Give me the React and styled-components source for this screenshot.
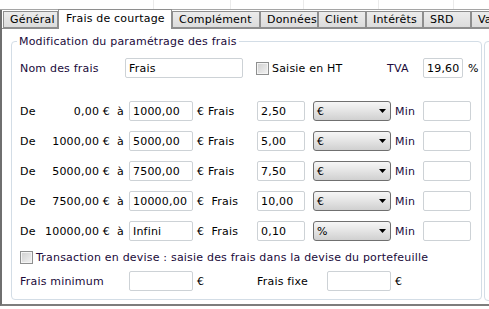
import React from 'react';
import styled, { createGlobalStyle } from 'styled-components';

const GlobalStyle = createGlobalStyle`
  *, *::before, *::after { box-sizing: border-box; }
  html, body { margin: 0; padding: 0; background: #fff; }
  body {
    font-family: "DejaVu Sans", Verdana, sans-serif;
    font-size: 11px;
    letter-spacing: 0.2px;
  }
`;

const Screen = styled.div`
  width: 489px;
  height: 309px;
  overflow: hidden;
  display: flex;
  flex-direction: column;
  background: #fff;
`;

const HeaderStrip = styled.div`
  display: flex;
  flex: none;
  height: 10px;
  border-bottom: 1px solid #a5a5a5;
`;

const HeaderCell = styled.div`
  flex: none;
  width: ${p => p.w}px;
  border-right: 1px solid #ebebeb;
`;

const Window = styled.div`
  flex: none;
  height: 296px;
  display: flex;
  flex-direction: column;
  border-left: 2px solid #6f6f6f;
  border-bottom: 2px solid #7d7d7d;
`;

const TabBar = styled.div`
  flex: none;
  height: 19px;
  display: flex;
  align-items: flex-end;
  padding-left: 1px;
  border-bottom: 1px solid #8e8e8e;
`;

const Tab = styled.div`
  flex: none;
  width: ${p => p.w}px;
  height: ${p => (p.active ? 20 : 17)}px;
  margin-bottom: ${p => (p.active ? -1 : 0)}px;
  position: relative;
  z-index: ${p => (p.active ? 1 : 0)};
  padding: ${p => (p.active ? '2px 0 0 7px' : '1px 0 0 6px')};
  border: 1px solid #8e8e8e;
  border-bottom: ${p => (p.active ? 'none' : '1px solid #8e8e8e')};
  background: ${p => (p.active ? '#fff' : 'linear-gradient(#ececec, #dcdcdc)')};
  color: #000;
  white-space: nowrap;
  overflow: hidden;
  line-height: 14px;
`;

const Panel = styled.div`
  flex: 1;
  display: flex;
  align-items: flex-start;
  overflow: hidden;
  padding: 6px 0 0 9px;
  background: #fff;
`;

const Group = styled.fieldset`
  flex: none;
  width: 471px;
  margin: 0;
  padding: 0 0 8px 5px;
  border: 1px solid #d3dde6;
  border-radius: 4px;
`;

const Legend = styled.legend`
  padding: 0 2px;
  line-height: 13px;
  color: #200a3a;
`;

const SideBox = styled.div`
  flex: none;
  width: 20px;
  height: 260px;
  margin: 6px 0 0 2px;
  border: 1px solid #d3dde6;
  border-radius: 4px;
`;

const Body = styled.div`
  display: flex;
  flex-direction: column;
  padding-left: 3px;
`;

const Row = styled.div`
  display: flex;
  align-items: center;
  height: ${p => p.h || 20}px;
  margin-top: ${p => p.mt || 0}px;
`;

const Label = styled.span`
  flex: none;
  width: ${p => (p.w ? `${p.w}px` : 'auto')};
  padding-left: ${p => p.pl || 0}px;
  text-align: ${p => p.align || 'left'};
  color: ${p => (p.dark ? '#000' : '#200a3a')};
  white-space: pre;
`;

const Field = styled.input`
  flex: none;
  width: ${p => p.w}px;
  height: 20px;
  margin: 0 0 0 ${p => p.ml || 0}px;
  padding: 0 3px;
  border: 1px solid #cdd2d6;
  border-radius: 2px;
  background: #fff;
  font: inherit;
  letter-spacing: inherit;
  color: #000;
  outline: none;
`;

const Select = styled.div`
  flex: none;
  width: 78px;
  height: 20px;
  margin-left: ${p => p.ml || 8}px;
  display: flex;
  align-items: center;
  justify-content: space-between;
  padding: 0 4px 0 3px;
  border: 1px solid #707070;
  border-radius: 3px;
  background: linear-gradient(#f6f6f6, #e4e4e4 50%, #d0d0d0);
  color: #000;
`;

const Check = styled.span`
  flex: none;
  width: 13px;
  height: 13px;
  margin-left: ${p => p.ml || 0}px;
  border: 1px solid #8e8f8f;
  box-shadow: inset 0 0 0 1px #f4f4f4;
  background: linear-gradient(135deg, #cfcfcf, #f3f3f3);
`;

const Arrow = () => (
  <svg width="7" height="4" viewBox="0 0 7 4">
    <path d="M0 0h7L3.5 4z" fill="#000" />
  </svg>
);

const tabs = [
  ['Général', 55],
  ['Frais de courtage', 114],
  ['Complément', 88],
  ['Données', 58],
  ['Client', 48],
  ['Intérêts', 57],
  ['SRD', 48],
  ['Valeurs', 60],
];

const tiers = [
  { from: '0,00 €', to: '1000,00', fee: '2,50', unit: '€' },
  { from: '1000,00 €', to: '5000,00', fee: '5,00', unit: '€' },
  { from: '5000,00 €', to: '7500,00', fee: '7,50', unit: '€' },
  { from: '7500,00 €', to: '10000,00', fee: '10,00', unit: '€', wide: true },
  { from: '10000,00 €', to: 'Infini', fee: '0,10', unit: '%', wide: true },
];

export default function App() {
  return (
    <Screen>
      <GlobalStyle />
      <HeaderStrip>
        <HeaderCell w={154} />
        <HeaderCell w={77} />
        <HeaderCell w={73} />
        <HeaderCell w={75} />
        <HeaderCell w={75} />
      </HeaderStrip>
      <Window>
        <TabBar>
          {tabs.map(([name, w], i) => (
            <Tab key={name} w={w} active={i === 1}>{name}</Tab>
          ))}
        </TabBar>
        <Panel>
          <Group>
            <Legend>Modification du paramétrage des frais</Legend>
            <Body>
              <Row mt={10}>
                <Label w={105}>Nom des frais</Label>
                <Field w={118} readOnly value="Frais" />
                <Check ml={13} />
                <Label w={118} pl={3} dark>Saisie en HT</Label>
                <Label w={36}>TVA</Label>
                <Field w={40} readOnly value="19,60" />
                <Label pl={5} dark>%</Label>
              </Row>
              {tiers.map((t, i) => (
                <Row key={i} mt={i === 0 ? 23 : 10}>
                  <Label w={16} dark>De</Label>
                  <Label w={74} align="right" dark>{t.from}</Label>
                  <Label w={19} pl={7} dark>à</Label>
                  <Field w={64} readOnly value={t.to} />
                  <Label w={64} pl={4} dark>{t.wide ? '€  Frais' : '€ Frais'}</Label>
                  <Field w={48} readOnly value={t.fee} />
                  <Select>
                    <span>{t.unit}</span>
                    <Arrow />
                  </Select>
                  <Label w={32} pl={4}>Min</Label>
                  <Field w={48} readOnly value="" />
                </Row>
              ))}
              <Row mt={9} h={14}>
                <Check />
                <Label pl={3}>Transaction en devise : saisie des frais dans la devise du portefeuille</Label>
              </Row>
              <Row mt={7}>
                <Label w={109}>Frais minimum</Label>
                <Field w={64} readOnly value="" />
                <Label w={64} pl={4} dark>€</Label>
                <Label w={70} dark>Frais fixe</Label>
                <Field w={64} readOnly value="" />
                <Label pl={4} dark>€</Label>
              </Row>
            </Body>
          </Group>
          <SideBox />
        </Panel>
      </Window>
    </Screen>
  );
}
